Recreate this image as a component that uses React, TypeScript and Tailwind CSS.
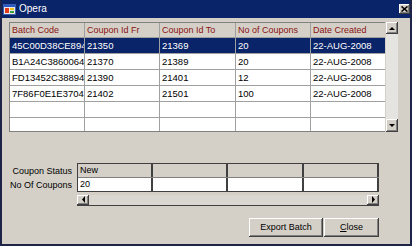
import React from 'react';

const cols = [75, 75, 76, 75, 75];
const headers = ['Batch Code', 'Coupon Id Fr', 'Coupon Id To', 'No of Coupons', 'Date Created'];

const rows = [
  ['45C00D38CE894', '21350', '21369', '20', '22-AUG-2008'],
  ['B1A24C3860064', '21370', '21389', '20', '22-AUG-2008'],
  ['FD13452C38894', '21390', '21401', '12', '22-AUG-2008'],
  ['7F86F0E1E3704', '21402', '21501', '100', '22-AUG-2008'],
  ['', '', '', '', ''],
  ['', '', '', '', ''],
];

const raised =
  'bg-[#d4d0c8] shadow-[inset_-1px_-1px_#404040,inset_1px_1px_#ffffff,inset_-2px_-2px_#808080]';

const Arrow = ({ dir }: { dir: 'up' | 'down' | 'left' | 'right' }) => {
  const pts = {
    up: '1,4 4,1 7,4',
    down: '1,1 4,4 7,1',
    left: '4,0 1,3.5 4,7',
    right: '1,0 4,3.5 1,7',
  }[dir];
  const vertical = dir === 'up' || dir === 'down';
  return (
    <svg width={vertical ? 8 : 5} height={vertical ? 5 : 8} viewBox={vertical ? '0 0 8 5' : '0 0 5 8'}>
      <polygon points={pts} fill="#000" />
    </svg>
  );
};

const OperaIcon = () => (
  <svg width="13" height="13" viewBox="0 0 13 13">
    <rect x="0.5" y="1.5" width="12" height="10" fill="#e8e8e8" stroke="#3a5fb0" />
    <rect x="1" y="2" width="11" height="2" fill="#2c58c8" />
    <rect x="2" y="5" width="4" height="5" fill="#e23a1a" />
    <rect x="7" y="5" width="4" height="2" fill="#f5c21b" />
    <rect x="7" y="8" width="4" height="2" fill="#3aa23a" />
  </svg>
);

export default function App() {
  return (
    <div className="w-[412px] h-[246px] flex flex-col bg-[#d4d0c8] border-x-2 border-b-2 border-[#1e2447] font-['Liberation_Sans',Arial,sans-serif] text-[9px] text-black leading-none select-none">
      {/* Title bar */}
      <div className="h-[18px] bg-[#0a246a] flex items-center pl-[1px] shrink-0">
        <OperaIcon />
        <span className="ml-[3px] text-white text-[10px]">Opera</span>
        <div className={`ml-auto w-[11px] h-[10px] flex items-center justify-center ${raised}`}>
          <svg width="7" height="6" viewBox="0 0 7 6">
            <path d="M0.5 0.5 L6.5 5.5 M6.5 0.5 L0.5 5.5" stroke="#000" strokeWidth="1.6" />
          </svg>
        </div>
      </div>

      <div className="flex-1 flex flex-col pt-[4px] pl-[7px]">
        {/* Batch table */}
        <div className="flex h-[110px]">
          <div className="w-[376px] h-full bg-white border-t border-l border-b border-[#808080] overflow-hidden">
            <div className="flex h-[15px] bg-[#d4d0c8] border-b border-[#a0a0a0]">
              {headers.map((h, i) => (
                <div
                  key={h}
                  style={{ width: cols[i] }}
                  className="shrink-0 flex items-center pl-[2px] border-r border-[#a0a0a0] text-[#8a1010] whitespace-nowrap overflow-hidden"
                >
                  {h}
                </div>
              ))}
            </div>
            {rows.map((r, ri) => (
              <div
                key={ri}
                className={`flex h-[16px] border-b border-[#a0a0a0] ${ri === 0 ? 'bg-[#0a246a] text-white' : ''}`}
              >
                {r.map((c, ci) => (
                  <div
                    key={ci}
                    style={{ width: cols[ci] }}
                    className="shrink-0 flex items-center pl-[2px] border-r border-[#a0a0a0] whitespace-nowrap overflow-hidden text-[9.5px]"
                  >
                    {c}
                  </div>
                ))}
              </div>
            ))}
          </div>
          <div className="w-[13px] h-full flex flex-col bg-[#e6e4e0] border-l border-[#d4d0c8]">
            <div className={`h-[12px] flex items-center justify-center ${raised}`}>
              <Arrow dir="up" />
            </div>
            <div className="flex-1" />
            <div className={`h-[13px] flex items-center justify-center ${raised}`}>
              <Arrow dir="down" />
            </div>
          </div>
        </div>

        {/* Coupon status grid */}
        <div className="flex mt-[31px] -ml-[7px]">
          <div className="w-[75px] flex flex-col text-right pr-[5px]">
            <div className="h-[14px] flex items-center justify-end pt-[3px]">Coupon Status</div>
            <div className="h-[14px] flex items-center justify-end pt-[3px]">No Of Coupons</div>
          </div>
          <div className="w-[302px] flex flex-col">
            <div className="border-t border-l border-[#404040]">
              <div className="flex h-[14px] bg-[#d4d0c8] border-b border-[#808080]">
                {['New', '', '', ''].map((c, i) => (
                  <div
                    key={i}
                    className={`${i === 2 ? 'w-[76px]' : 'w-[75px]'} shrink-0 flex items-center pl-[2px] border-r-2 border-[#404040]`}
                  >
                    {c}
                  </div>
                ))}
              </div>
              <div className="flex h-[14px] bg-white border-b border-[#404040]">
                {['20', '', '', ''].map((c, i) => (
                  <div
                    key={i}
                    className={`${i === 2 ? 'w-[76px]' : 'w-[75px]'} shrink-0 flex items-center pl-[2px] border-r-2 border-[#404040]`}
                  >
                    {c}
                  </div>
                ))}
              </div>
            </div>
            <div className="mt-[3px] h-[11px] flex bg-[#dad7d1] border-b border-[#404040]">
              <div className={`w-[12px] flex items-center justify-center ${raised}`}>
                <Arrow dir="left" />
              </div>
              <div className="flex-1" />
              <div className={`w-[12px] flex items-center justify-center ${raised}`}>
                <Arrow dir="right" />
              </div>
            </div>
          </div>
        </div>

        {/* Buttons */}
        <div className="w-[370px] flex justify-end mt-[12px]">
          <button className={`w-[74px] h-[19px] text-[9px] ${raised}`}>Export Batch</button>
          <button className={`w-[55px] h-[19px] ml-[1px] text-[9px] ${raised}`}>
            <span className="underline">C</span>lose
          </button>
        </div>
      </div>
    </div>
  );
}
